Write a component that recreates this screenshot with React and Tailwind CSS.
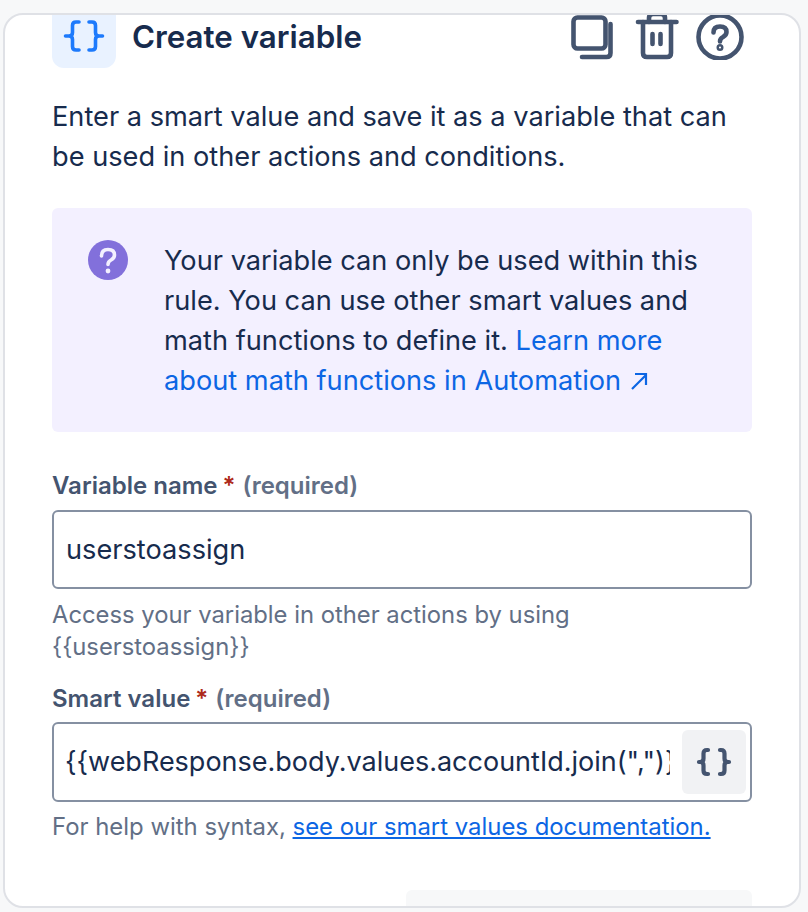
import React from 'react';

const Braces = ({ color, className }) => (
  <svg viewBox="0 0 64 64" className={className} fill="none" stroke={color} strokeWidth="3.6" strokeLinecap="round" strokeLinejoin="round">
    <path d="M27 18H24Q20.5 18 20.5 21.5V28.5Q20.5 32 17 32H13.5M17 32Q20.5 32 20.5 35.5V42.5Q20.5 46 24 46H27" />
    <path d="M37 18H40Q43.5 18 43.5 21.5V28.5Q43.5 32 47 32H50.5M47 32Q43.5 32 43.5 35.5V42.5Q43.5 46 40 46H37" />
  </svg>
);

const HeaderIcon = ({ children }) => (
  <svg viewBox="0 0 48 48" className="w-12 h-12" fill="none" stroke="#44546f" strokeWidth="4.6" strokeLinecap="round" strokeLinejoin="round">
    {children}
  </svg>
);

const Label = ({ children }) => (
  <div className="text-[24px] leading-[32px] font-semibold text-[#44546f]">
    {children}
    <span className="text-[#ae2a19] ml-[5px]">*</span>
    <span className="text-[#626f86] ml-[7px]">(required)</span>
  </div>
);

export default function App() {
  return (
    <div className="w-[808px] h-[912px] bg-[#f7f8f9] pt-[13px] pl-[3px] pr-[7px] pb-[4px] font-['Inter',sans-serif] overflow-hidden">
      <div className="h-full bg-white border-2 border-[#dfe1e6] rounded-[20px] overflow-hidden pl-[47px] pr-[47px] flex flex-col">
        <div className="flex items-center justify-between -mt-[11px] pr-2">
          <div className="flex items-center gap-4">
            <div className="w-16 h-16 bg-[#e9f2ff] rounded-xl">
              <Braces color="#1d7afc" className="w-16 h-16" />
            </div>
            <h1 className="text-[31.3px] leading-[40px] font-semibold text-[#172b4d] mt-[2px]">Create variable</h1>
          </div>
          <div className="flex items-center gap-4">
            <HeaderIcon>
              <rect x="5.5" y="5.5" width="32" height="31" rx="4" />
              <path d="M42.5 12V41Q42.5 45 38.500 45H14" />
            </HeaderIcon>
            <HeaderIcon>
              <path d="M6 10H44.500" />
              <path d="M11 10V41Q11 45 15 45H35Q39 45 39 41V10" />
              <path d="M17 10V6Q17 2 21 2H29Q33 2 33 6V10" />
              <path d="M20.500 22V32M28.500 22V32" />
            </HeaderIcon>
            <HeaderIcon>
              <circle cx="24" cy="25" r="21.500" />
              <path d="M17.500 20.500Q17.500 14.500 24 14.500Q30.500 14.500 30.500 20Q30.500 23 27 25Q24 26.500 24 29.500" />
              <circle cx="24" cy="35.500" r="1.200" />
            </HeaderIcon>
          </div>
        </div>

        <p className="mt-[29px] text-[27.2px] leading-[40px] text-[#172b4d]">
          Enter a smart value and save it as a variable that can be used in other actions and conditions.
        </p>

        <div className="mt-[31px] bg-[#f3f0ff] rounded-md pl-9 pr-8 pt-8 pb-[31px] flex items-start gap-9">
          <svg viewBox="0 0 40 40" className="w-10 h-10 shrink-0">
            <circle cx="20" cy="20" r="20" fill="#8270db" />
            <path d="M13.500 16Q13.500 9.500 20 9.500Q26.500 9.500 26.500 15Q26.500 18 23 20Q20 21.500 20 24.500" fill="none" stroke="#f3f0ff" strokeWidth="3.600" strokeLinecap="round" />
            <circle cx="20" cy="31" r="2.400" fill="#f3f0ff" />
          </svg>
          <p className="mt-px text-[27.2px] leading-[40px] text-[#172b4d]">
            Your variable can only be used within this rule. You can use other smart values and math functions to define it.{' '}
            <a className="text-[#0c66e4]">
              Learn more about math functions in Automation
              <svg viewBox="0 0 20 20" className="inline-block w-5 h-5 ml-2 align-[-1px]" fill="none" stroke="#0c66e4" strokeWidth="2.200">
                <path d="M3 18L17 4M6 3H17V14" />
              </svg>
            </a>
          </p>
        </div>

        <div className="mt-[38px]">
          <Label>Variable name</Label>
          <input
            readOnly
            value="userstoassign"
            className="mt-[8px] block w-full h-[79px] border-2 border-[#8590a2] rounded-md px-3 text-[27.2px] text-[#172b4d] outline-none"
          />
          <div className="mt-[10px] text-[23.8px] leading-[32px] text-[#626f86]">
            Access your variable in other actions by using
            <br />
            {'{{userstoassign}}'}
          </div>
        </div>

        <div className="mt-[20px]">
          <Label>Smart value</Label>
          <div className="mt-[7px] h-[80px] border-2 border-[#8590a2] rounded-md pl-[11px] pr-[4px] flex items-center">
            <input
              readOnly
              value={'{{webResponse.body.values.accountId.join(",")}}'}
              className="flex-1 min-w-0 text-[27px] text-[#172b4d] outline-none"
            />
            <div className="w-16 h-16 ml-[12px] bg-[#f1f2f4] rounded-md shrink-0">
              <svg viewBox="0 0 64 64" className="w-16 h-16" fill="none" stroke="#44546f" strokeWidth="4.200" strokeLinecap="round" strokeLinejoin="round">
                <path d="M26 20H25Q21.500 20 21.500 23.500V28.500Q21.500 32 18 32H17M18 32Q21.500 32 21.500 35.500V40.500Q21.500 44 25 44H26" />
                <path d="M38 20H39Q42.500 20 42.500 23.500V28.500Q42.500 32 46 32H47M46 32Q42.500 32 42.500 35.500V40.500Q42.500 44 39 44H38" />
              </svg>
            </div>
          </div>
          <div className="mt-[9px] text-[23.9px] leading-[32px] text-[#626f86]">
            For help with syntax,{' '}
            <a className="text-[#0c66e4] underline">see our smart values documentation.</a>
          </div>
        </div>

        <div className="mt-auto ml-auto w-[346px] h-[16px] bg-[#f7f8f9] rounded-t-md" />
      </div>
    </div>
  );
}
